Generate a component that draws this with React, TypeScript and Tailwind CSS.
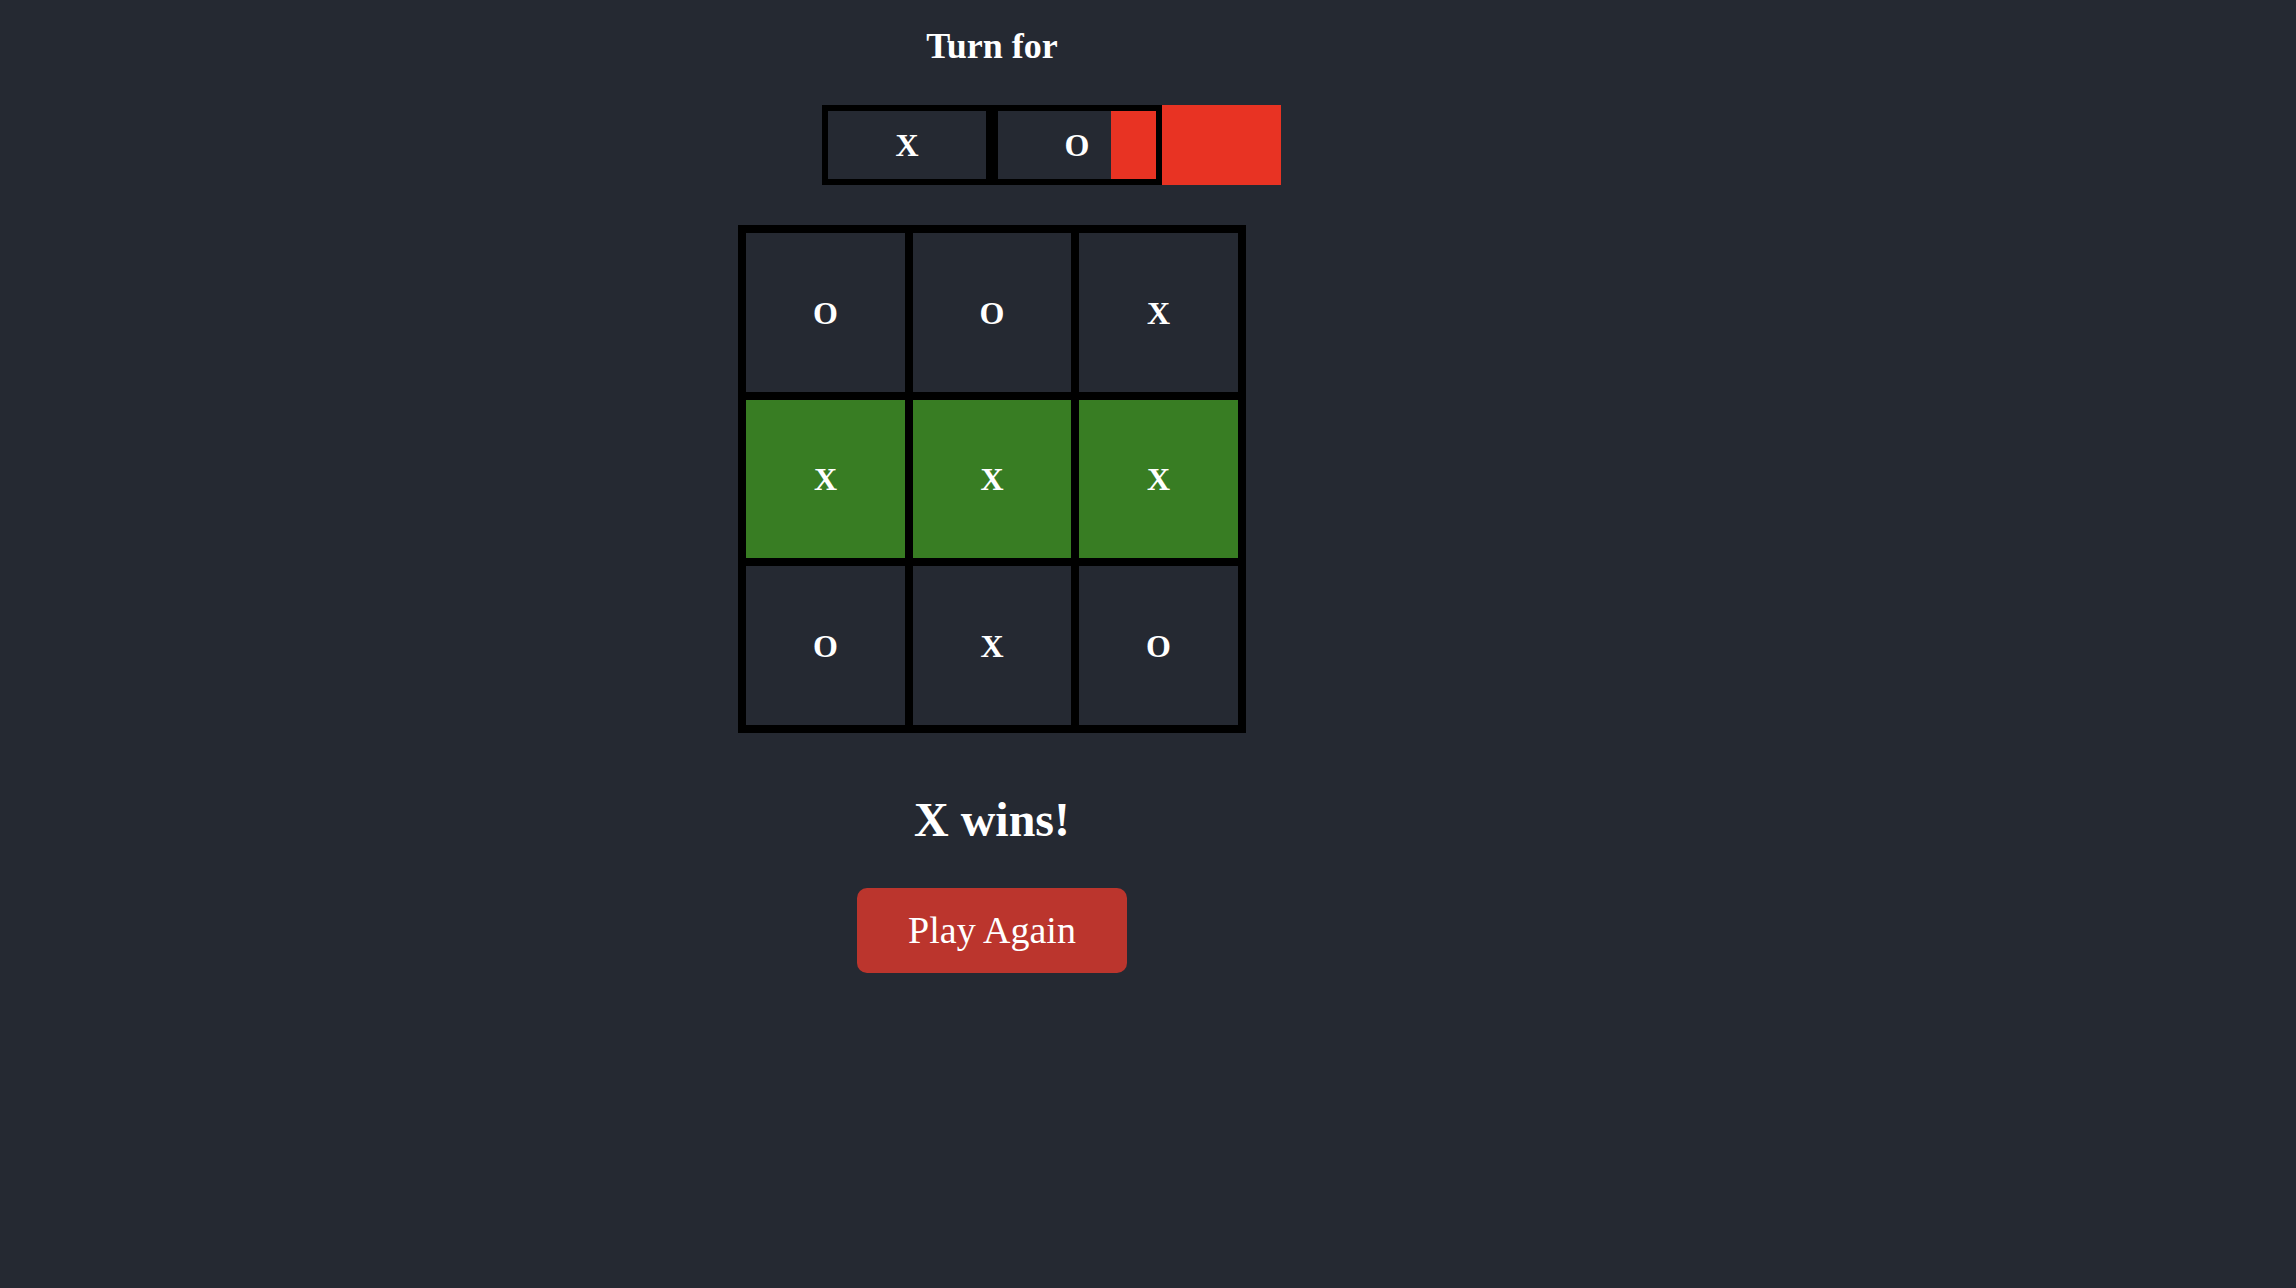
const board = [
  ["O", "O", "X"],
  ["X", "X", "X"],
  ["O", "X", "O"],
];
const winRow = 1;

export default function App() {
  return (
    <main
      className="min-h-screen w-full bg-[#252932] text-white flex flex-col items-center pr-[312px]"
      style={{ fontFamily: '"Liberation Serif", "Times New Roman", serif' }}
    >
      {/* Turn header */}
      <h2 className="pt-[25px] text-[36px] leading-[42px] font-bold">Turn for</h2>

      <div className="relative mt-[38px] flex">
        <div className="w-[170px] h-[80px] border-[6px] border-black flex items-center justify-center text-[32px] font-bold">
          X
        </div>
        <div className="relative w-[170px] h-[80px] border-[6px] border-black flex items-center justify-center text-[32px] font-bold">
          O
          <span className="absolute right-0 top-0 bottom-0 w-[45px] bg-[#e83323]" />
        </div>
        {/* active turn marker */}
        <span className="absolute left-full top-0 w-[119px] h-[80px] bg-[#e83323]" />
      </div>

      {/* Board */}
      <div className="mt-[40px] grid grid-cols-[159px_158px_159px] grid-rows-[159px_158px_159px] gap-[8px] p-[8px] bg-black">
        {board.map((row, r) =>
          row.map((cell, c) => (
            <div
              key={`${r}-${c}`}
              className={
                r === winRow
                  ? "flex items-center justify-center bg-[#387d23] text-[32px] font-bold"
                  : "flex items-center justify-center bg-[#252932] text-[32px] font-bold"
              }
            >
              {cell}
            </div>
          ))
        )}
      </div>

      <h2 className="mt-[59px] text-[48px] leading-[56px] font-bold">X wins!</h2>

      <button className="mt-[40px] w-[270px] h-[85px] rounded-[10px] bg-[#bb352d] text-[38px] text-white flex items-center justify-center">
        Play Again
      </button>
    </main>
  );
}
